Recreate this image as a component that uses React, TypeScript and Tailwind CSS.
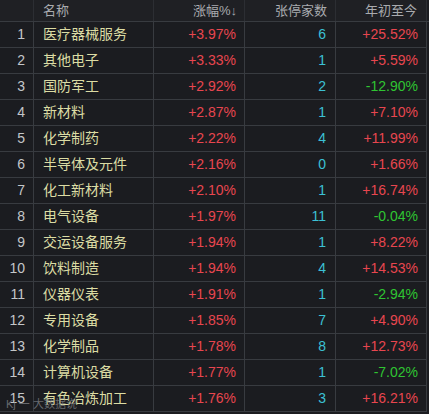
const ROWS = [
  { name: "医疗器械服务", change: "+3.97%", limit: "6", ytd: "+25.52%" },
  { name: "其他电子", change: "+3.33%", limit: "1", ytd: "+5.59%" },
  { name: "国防军工", change: "+2.92%", limit: "2", ytd: "-12.90%" },
  { name: "新材料", change: "+2.87%", limit: "1", ytd: "+7.10%" },
  { name: "化学制药", change: "+2.22%", limit: "4", ytd: "+11.99%" },
  { name: "半导体及元件", change: "+2.16%", limit: "0", ytd: "+1.66%" },
  { name: "化工新材料", change: "+2.10%", limit: "1", ytd: "+16.74%" },
  { name: "电气设备", change: "+1.97%", limit: "11", ytd: "-0.04%" },
  { name: "交运设备服务", change: "+1.94%", limit: "1", ytd: "+8.22%" },
  { name: "饮料制造", change: "+1.94%", limit: "4", ytd: "+14.53%" },
  { name: "仪器仪表", change: "+1.91%", limit: "1", ytd: "-2.94%" },
  { name: "专用设备", change: "+1.85%", limit: "7", ytd: "+4.90%" },
  { name: "化学制品", change: "+1.78%", limit: "8", ytd: "+12.73%" },
  { name: "计算机设备", change: "+1.77%", limit: "1", ytd: "-7.02%" },
  { name: "有色冶炼加工", change: "+1.76%", limit: "3", ytd: "+16.21%" },
];

function valueClass(v: string) {
  return v.startsWith("-") ? "text-[#2fc432]" : "text-[#e8464f]";
}

const cell = "border-r border-b border-[#383b40] h-[26px] flex items-center";

export default function App() {
  return (
    <div
      className="relative w-[429px] h-[414px] bg-[#1b1c20] text-[14px] overflow-hidden"
      style={{ fontFamily: '"Liberation Sans", "Noto Sans CJK SC", sans-serif' }}
    >
      <div className="grid grid-cols-[34px_120px_91px_91px_91px] border-b border-[#383b40]">
        <div className="h-[21px] bg-[#1f2024] border-r border-[#2c2e33]" />
        <div className="h-[21px] bg-[#1f2024] border-r border-[#2c2e33] flex items-center pl-[9px] text-[#a9abaf] text-[13px]">
          名称
        </div>
        <div className="h-[21px] bg-[#1f2024] border-r border-[#2c2e33] flex items-center justify-end pr-[7px] text-[#a9abaf] text-[13px]">
          涨幅%↓
        </div>
        <div className="h-[21px] bg-[#1f2024] border-r border-[#2c2e33] flex items-center justify-end pr-[8px] text-[#a9abaf] text-[13px]">
          张停家数
        </div>
        <div className="h-[21px] bg-[#1f2024] border-r border-[#2c2e33] flex items-center justify-end pr-[9px] text-[#a9abaf] text-[13px]">
          年初至今
        </div>
      </div>
      {ROWS.map((row, i) => (
        <div key={row.name} className="grid grid-cols-[34px_120px_91px_91px_91px]">
          <div className={`${cell} justify-end pr-[8px] text-[#c4c6c9]`}>{i + 1}</div>
          <div className={`${cell} pl-[9px] text-[#dcdca4]`}>{row.name}</div>
          <div className={`${cell} justify-end pr-[8px] ${valueClass(row.change)}`}>{row.change}</div>
          <div className={`${cell} justify-end pr-[9px] text-[#3cc0d4]`}>{row.limit}</div>
          <div className={`${cell} justify-end pr-[8px] ${valueClass(row.ytd)}`}>{row.ytd}</div>
        </div>
      ))}
      <div className="absolute left-[6px] bottom-[2px] text-[11px] text-[#8a8c90]/70">
        Kj 一 大数据说
      </div>
    </div>
  );
}
